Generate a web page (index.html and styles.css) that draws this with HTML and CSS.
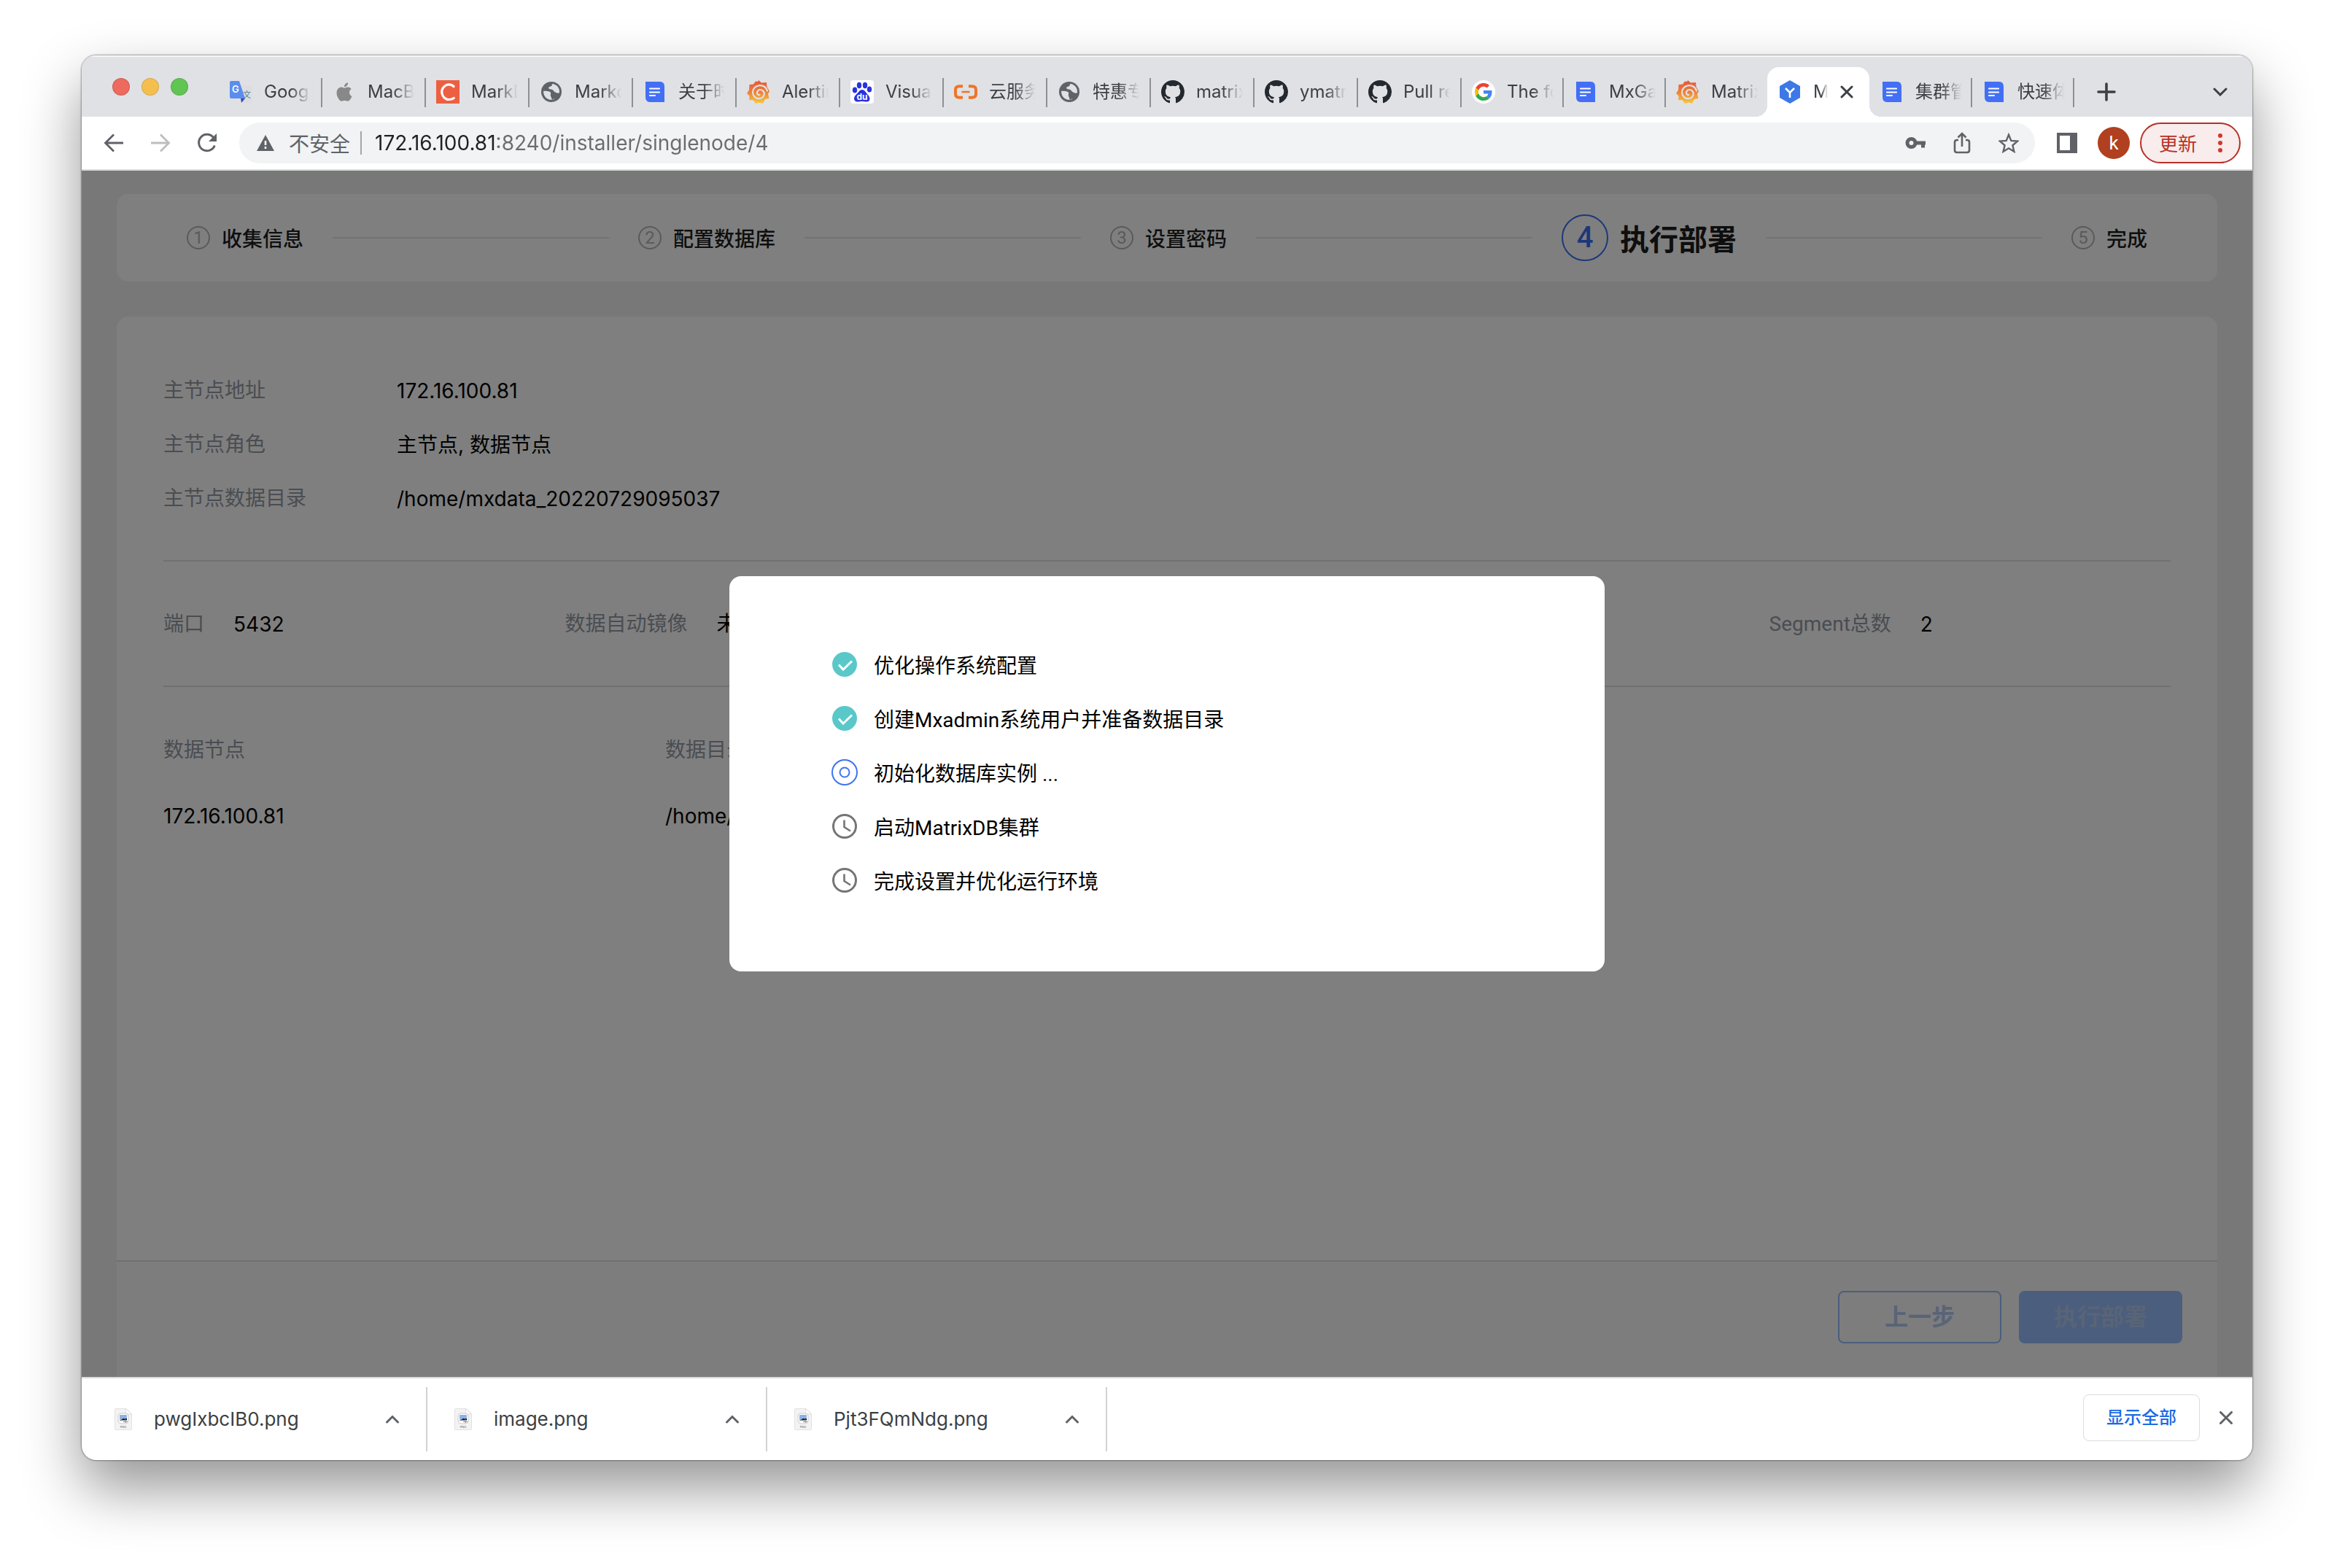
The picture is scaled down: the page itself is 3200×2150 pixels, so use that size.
FILE: index.html
```html
<!DOCTYPE html>
<html lang="zh-CN">
<head>
<meta charset="utf-8">
<title>MatrixDB</title>
<link rel="stylesheet" href="styles.css">
</head>
<body>
<svg class="sprite" aria-hidden="true">
  <defs>
    <linearGradient id="flame" x1="0" y1="0" x2="0" y2="1">
      <stop offset="0" stop-color="#e2553a"/><stop offset=".5" stop-color="#ee8038"/><stop offset="1" stop-color="#f7c93c"/>
    </linearGradient>
  </defs>
  <symbol id="i-translate" viewBox="0 0 32 32">
    <path d="M12 7h17a2 2 0 0 1 2 2v20a2 2 0 0 1-2 2H18z" fill="#dcdddf"/>
    <path d="M16 25h6l-5 6z" fill="#3a4bb5"/>
    <path d="M3 1h11l8 24H3a2 2 0 0 1-2-2V3a2 2 0 0 1 2-2z" fill="#5b8def"/>
    <text x="4" y="17" font-family="Inter, sans-serif" font-size="13" font-weight="600" fill="#fff">G</text>
    <text x="19" y="24" font-family="'Noto Sans CJK SC', sans-serif" font-size="11" fill="#5c7a8c">文</text>
  </symbol>
  <symbol id="i-apple" viewBox="-3 -3 30 30">
    <path fill="#888" d="M12.152 6.896c-.948 0-2.415-1.078-3.96-1.04-2.04.027-3.91 1.183-4.961 3.014-2.117 3.675-.546 9.103 1.519 12.09 1.013 1.454 2.208 3.09 3.792 3.039 1.52-.065 2.09-.987 3.935-.987 1.831 0 2.35.987 3.96.948 1.637-.026 2.676-1.48 3.676-2.948 1.156-1.688 1.636-3.325 1.662-3.415-.039-.013-3.182-1.221-3.22-4.857-.026-3.04 2.48-4.494 2.597-4.559-1.429-2.09-3.623-2.324-4.39-2.376-2-.156-3.675 1.09-4.61 1.09zM15.53 3.83c.843-1.012 1.4-2.427 1.245-3.83-1.207.052-2.662.805-3.532 1.818-.78.896-1.454 2.338-1.273 3.714 1.338.104 2.715-.688 3.559-1.701"/>
  </symbol>
  <symbol id="i-c" viewBox="0 0 32 32">
    <path fill="#ec6041" d="M0 0h32v32H0z"/>
    <path d="M24 8.500C21 5.500 16 5 12.500 7.500S7 14 8 18.500s5 8 9.500 8c3 0 5-.7 6.800-2" fill="none" stroke="#fff" stroke-width="3.200" stroke-linecap="round"/>
  </symbol>
  <symbol id="i-globe" viewBox="0 0 32 32">
    <circle cx="16" cy="16" r="14" fill="#5f6368"/>
    <path fill="#dfe1e5" d="M17 5c0 3-1.500 3.500-3.500 4s-1.500 3 .5 3.200 4 .3 5 2.300 2.500 1.500 3.500 2.500 3.500 1 4.500 0C27.500 10 23 5.500 17 5zM5 15c3-.5 6 0 8 .5s2.500 2 2 3.500.5 3 2 3.500 3-.5 4-1.500l-1 5C13 29 5 24 5 15z"/>
    <path fill="#5f6368" d="M14.500 20c2 2.500 4 1 5.500-.5l2 4.500-5 3z"/>
  </symbol>
  <symbol id="i-doc" viewBox="0 0 32 32">
    <path fill="#426ff5" d="M3 2h20q6 0 6 7v21H9q-6 0-6-7z"/>
    <path d="M9 11.500h13M9 16.500h13M9 21h7" stroke="#fff" stroke-width="2.200" stroke-linecap="round"/>
  </symbol>
  <symbol id="i-grafana" viewBox="0 0 32 32">
    <path fill="url(#flame)" d="M16 0l4 3.500 7-.5.500 6L31 15l-2 4 1.500 6-5.500 1-3 6-5-1.500L12 32l-3-4.500-6-.5.500-5.500L0 18l3-4.500L3.500 6 9 5.500 12 1.500l3 .5z"/>
    <path d="M28 14.500C26 9 21.500 6.800 17 7.200 11.500 7.800 7.800 12 8 17c.3 5 4.500 8.500 9 8.200 4-.3 7-3.500 6.800-7-.3-3.200-3-5.400-5.800-5.200-2.500.2-4.200 2.300-4 4.400.2 1.800 1.700 3 3.300 2.800" fill="none" stroke="#dfe1e5" stroke-width="2.200" stroke-linecap="round"/>
  </symbol>
  <symbol id="i-baidu" viewBox="0 0 32 32">
    <rect width="32" height="32" rx="4" fill="#fff"/>
    <g fill="#2932e1"><ellipse cx="6" cy="13.500" rx="3.200" ry="4"/><ellipse cx="12" cy="7" rx="3.200" ry="4.200"/><ellipse cx="20" cy="7" rx="3.200" ry="4.200"/><ellipse cx="26" cy="12.500" rx="3.200" ry="4"/>
    <path d="M16 13c4 0 5 4 8 7s4 9-1 9.500c-3 .3-4-.5-7-.5s-4 .8-7 .5C4 29 4 23 7.500 20S12 13 16 13z"/></g>
    <text x="8.500" y="27" font-family="Inter, sans-serif" font-size="12" font-weight="700" fill="#fff">du</text>
  </symbol>
  <symbol id="i-aliyun" viewBox="0 0 32 32">
    <path d="M12 8.200H7.500Q2 8.200 2 13v6q0 4.800 5.500 4.800H12M20 8.200h4.500q5.500 0 5.500 4.800v6q0 4.800-5.500 4.800H20" fill="none" stroke="#f07427" stroke-width="4"/>
    <path d="M10.500 16h11" stroke="#f07427" stroke-width="2.400"/>
  </symbol>
  <symbol id="i-github" viewBox="0 0 16 16">
    <path fill="#24292f" d="M8 0C3.580 0 0 3.580 0 8c0 3.540 2.290 6.530 5.470 7.590.4.070.55-.17.55-.38 0-.19-.01-.82-.01-1.490-2.010.37-2.530-.49-2.690-.94-.09-.23-.48-.94-.82-1.130-.28-.15-.68-.52-.01-.53.63-.01 1.080.58 1.230.82.72 1.210 1.870.87 2.330.66.07-.52.28-.87.51-1.070-1.780-.2-3.640-.89-3.640-3.950 0-.87.31-1.590.82-2.150-.08-.2-.36-1.020.08-2.120 0 0 .67-.21 2.200.82.64-.18 1.320-.27 2-.27s1.360.09 2 .27c1.530-1.040 2.200-.82 2.200-.82.44 1.100.16 1.920.08 2.120.51.56.82 1.270.82 2.150 0 3.070-1.870 3.750-3.650 3.950.29.25.54.73.54 1.480 0 1.070-.01 1.930-.01 2.200 0 .21.15.46.55.38A8.010 8.010 0 0 0 16 8c0-4.420-3.580-8-8-8z"/>
  </symbol>
  <symbol id="i-google" viewBox="-8 -8 64 64">
    <circle cx="24" cy="24" r="32" fill="#fff"/>
    <path fill="#EA4335" d="M24 9.500c3.540 0 6.710 1.220 9.210 3.600l6.850-6.850C35.900 2.380 30.470 0 24 0 14.620 0 6.510 5.380 2.560 13.220l7.980 6.190C12.430 13.720 17.740 9.500 24 9.500z"/>
    <path fill="#4285F4" d="M46.980 24.550c0-1.570-.15-3.090-.38-4.550H24v9.020h12.940c-.58 2.960-2.260 5.480-4.780 7.180l7.730 6c4.510-4.180 7.090-10.360 7.090-17.650z"/>
    <path fill="#FBBC05" d="M10.530 28.590c-.48-1.450-.76-2.990-.76-4.590s.27-3.140.76-4.590l-7.980-6.190C.92 16.460 0 20.120 0 24c0 3.880.92 7.540 2.560 10.780l7.970-6.190z"/>
    <path fill="#34A853" d="M24 48c6.480 0 11.930-2.130 15.890-5.810l-7.730-6c-2.150 1.450-4.920 2.300-8.160 2.300-6.260 0-11.570-4.220-13.470-9.910l-7.980 6.190C6.510 42.620 14.620 48 24 48z"/>
  </symbol>
  <symbol id="i-ymatrix" viewBox="0 0 32 32">
    <path fill="#3c78e7" d="M16 0l14 8v16l-14 8L2 24V8z"/>
    <path d="M10 11l6 6 6-6M16 17v7" fill="none" stroke="#fff" stroke-width="2.600"/>
  </symbol>
  <symbol id="i-up" viewBox="0 0 20 12"><path d="M2.500 10L10 2.500 17.500 10" fill="none" stroke="#5f6368" stroke-width="3" stroke-linecap="round"/></symbol>
  <symbol id="i-png" viewBox="0 0 24 30">
    <path d="M2 .5h14l7.500 7.500v20q0 1.500-1.500 1.500H2Q.5 29.500.5 28V2Q.5.500 2 .5z" fill="#f3f3f3" stroke="#e2e2e2"/>
    <path d="M15.500.5v7.500h8z" fill="#fff" stroke="#d5d5d5" stroke-width=".8"/>
    <rect x="5" y="7" width="14" height="14" rx="4" fill="#fff" stroke="#ccc"/>
    <path d="M7 10q0-1 1-1h8q1 0 1 1v5H7z" fill="#8db1e8"/>
    <path d="M7 16l4-1 1-1.500 1 1 4-.5v2.500H7z" fill="#10131a"/><path d="M12 18.500h6M15 15v5" stroke="#888" stroke-width="1"/>
    <text x="12" y="26.500" text-anchor="middle" font-family="Inter, sans-serif" font-size="4" font-weight="700" fill="#999">PNG</text>
  </symbol>
  <symbol id="i-check" viewBox="0 0 36 36"><circle cx="18" cy="18" r="17" fill="#5ac8c8"/><path d="M10 18.500l6 6.500L28 13.500" fill="none" stroke="#fff" stroke-width="3"/></symbol>
  <symbol id="i-running" viewBox="0 0 36 36"><g fill="none" stroke="#3d74f0" stroke-width="2"><circle cx="18" cy="18" r="17"/><circle cx="18" cy="18" r="6.500"/></g></symbol>
  <symbol id="i-clock" viewBox="0 0 36 36"><g fill="none" stroke="#757575" stroke-width="3"><circle cx="18" cy="18" r="15.500"/><path d="M17.500 9.500v9.500l8.500 5.500" stroke-width="2.600"/></g></symbol>
</svg>

<div class="window">
  <header class="tabstrip">
    <div class="lights"><i class="light red"></i><i class="light yellow"></i><i class="light green"></i></div>
    <nav class="tabs">
      <a class="tab" href="#"><svg><use href="#i-translate"/></svg><span>Googl</span></a>
      <a class="tab" href="#"><svg><use href="#i-apple"/></svg><span>MacB</span></a>
      <a class="tab" href="#"><svg><use href="#i-c"/></svg><span>MarkD</span></a>
      <a class="tab" href="#"><svg><use href="#i-globe"/></svg><span>Markd</span></a>
      <a class="tab" href="#"><svg><use href="#i-doc"/></svg><span>关于时</span></a>
      <a class="tab" href="#"><svg><use href="#i-grafana"/></svg><span>Alertin</span></a>
      <a class="tab" href="#"><svg><use href="#i-baidu"/></svg><span>Visual</span></a>
      <a class="tab" href="#"><svg><use href="#i-aliyun"/></svg><span>云服务</span></a>
      <a class="tab" href="#"><svg><use href="#i-globe"/></svg><span>特惠专</span></a>
      <a class="tab" href="#"><svg><use href="#i-github"/></svg><span>matrix</span></a>
      <a class="tab" href="#"><svg><use href="#i-github"/></svg><span>ymatri</span></a>
      <a class="tab" href="#"><svg><use href="#i-github"/></svg><span>Pull re</span></a>
      <a class="tab narrow" href="#"><svg><use href="#i-google"/></svg><span>The fo</span></a>
      <a class="tab narrow" href="#"><svg><use href="#i-doc"/></svg><span>MxGa</span></a>
      <a class="tab narrow bare" href="#"><svg><use href="#i-grafana"/></svg><span>Matrix</span></a>
      <div class="tab narrow active"><svg><use href="#i-ymatrix"/></svg><span>M</span>
        <button class="icon-btn" aria-label="关闭标签页"><svg class="close" viewBox="0 0 18 18"><path d="M2 2l14 14M16 2L2 16" stroke="#3c4043" stroke-width="3" stroke-linecap="round"/></svg></button></div>
      <a class="tab narrow" href="#"><svg><use href="#i-doc"/></svg><span>集群管</span></a>
      <a class="tab narrow" href="#"><svg><use href="#i-doc"/></svg><span>快速体</span></a>
    </nav>
    <button class="icon-btn new-tab" aria-label="新标签页"><svg width="26" height="26" viewBox="0 0 26 26"><path d="M13 2v22M2 13h22" stroke="#3c4043" stroke-width="3.600" stroke-linecap="round"/></svg></button>
    <button class="icon-btn tab-list" aria-label="搜索标签页"><svg width="20" height="12" viewBox="0 0 20 12"><path d="M2 2l8 8 8-8" fill="none" stroke="#3c4043" stroke-width="3" stroke-linecap="round"/></svg></button>
  </header>

  <div class="toolbar">
    <div class="nav-buttons">
      <button class="icon-btn" aria-label="后退"><svg width="28" height="28" viewBox="0 0 28 28"><path d="M27 14H3M14 2.500L2.500 14 14 25.500" fill="none" stroke="#5f6368" stroke-width="2.800"/></svg></button>
      <button class="icon-btn" aria-label="前进"><svg width="28" height="28" viewBox="0 0 28 28"><path d="M1 14h24M14 2.500L25.500 14 14 25.500" fill="none" stroke="#bcbec1" stroke-width="2.800"/></svg></button>
      <button class="icon-btn" aria-label="重新加载"><svg width="28" height="28" viewBox="0 0 28 28"><path d="M24.300 17.500A11.200 11.200 0 1 1 22.500 6.500" fill="none" stroke="#5f6368" stroke-width="3"/><path d="M27 1v11H16z" fill="#5f6368"/></svg></button>
    </div>
    <div class="omnibox">
      <svg class="warn" width="26" height="24" viewBox="0 0 26 24"><path d="M13 1L25 23H1z" fill="#5f6368"/><path d="M13 9v6M13 17v3" stroke="#fff" stroke-width="2.600"/></svg>
      <label class="insecure" for="url">不安全</label>
      <input class="url" id="url" type="text" value="172.16.100.81:8240/installer/singlenode/4">
      <button class="icon-btn" aria-label="密码"><svg width="28" height="18" viewBox="0 0 28 18"><path d="M8.500 9m-5.500 0a5.500 5.500 0 1 0 11 0 5.500 5.500 0 1 0-11 0M14 9h14M24.500 9v6.500" fill="none" stroke="#5f6368" stroke-width="5"/></svg></button>
      <button class="icon-btn" aria-label="分享"><svg width="28" height="30" viewBox="0 0 28 30"><path d="M9 11H7q-3 0-3 3v11q0 3 3 3h14q3 0 3-3V14q0-3-3-3h-2M14 20V3M8.500 7.500L14 2l5.500 5.500" fill="none" stroke="#5f6368" stroke-width="2.600"/></svg></button>
      <button class="icon-btn" aria-label="添加书签"><svg width="28" height="28" viewBox="0 0 28 28"><path d="M14 2.800l3.300 8.100 8.700.7-6.600 5.700 2 8.500L14 21.300l-7.400 4.500 2-8.500L2 11.600l8.700-.7z" fill="none" stroke="#5f6368" stroke-width="2.400"/></svg></button>
    </div>
    <button class="icon-btn" aria-label="侧边栏"><svg width="28" height="28" viewBox="0 0 28 28"><path d="M2 2h24v24H2z" fill="none" stroke="#5f6368" stroke-width="4"/><path d="M18 2h8v24h-8z" fill="#5f6368"/></svg></button>
    <button class="avatar">k</button>
    <button class="update">更新<svg width="6" height="28" viewBox="0 0 6 28"><g fill="#d0382b"><circle cx="3" cy="4" r="3"/><circle cx="3" cy="14" r="3"/><circle cx="3" cy="24" r="3"/></g></svg></button>
  </div>

  <main class="viewport">
    <ol class="steps">
      <li class="step"><span class="num">1</span>收集信息</li>
      <li class="step"><span class="num">2</span>配置数据库</li>
      <li class="step"><span class="num">3</span>设置密码</li>
      <li class="step current"><span class="num">4</span>执行部署</li>
      <li class="step"><span class="num">5</span>完成</li>
    </ol>
    <section class="card">
      <dl class="facts">
        <div class="fact"><dt>主节点地址</dt><dd class="latin">172.16.100.81</dd></div>
        <div class="fact"><dt>主节点角色</dt><dd class="latin">主节点, 数据节点</dd></div>
        <div class="fact"><dt>主节点数据目录</dt><dd class="latin">/home/mxdata_20220729095037</dd></div>
      </dl>
      <dl class="summary">
        <div class="stat"><dt>端口</dt><dd class="latin">5432</dd></div>
        <div class="stat"><dt>数据自动镜像</dt><dd>未启用</dd></div>
        <div class="stat last"><dt>Segment总数</dt><dd class="latin">2</dd></div>
      </dl>
      <table class="nodes">
        <thead><tr><th>数据节点</th><th>数据目录</th><th></th><th></th></tr></thead>
        <tbody><tr><td>172.16.100.81</td><td>/home/mxdata</td><td></td><td></td></tr></tbody>
      </table>
      <footer class="actions">
        <button class="btn outline" disabled>上一步</button>
        <button class="btn solid" disabled>执行部署</button>
      </footer>
    </section>
    <div class="overlay">
      <ul class="dialog" role="dialog" aria-label="执行部署">
        <li><svg><use href="#i-check"/></svg>优化操作系统配置</li>
        <li><svg><use href="#i-check"/></svg>创建Mxadmin系统用户并准备数据目录</li>
        <li><svg><use href="#i-running"/></svg>初始化数据库实例 ...</li>
        <li><svg><use href="#i-clock"/></svg>启动MatrixDB集群</li>
        <li><svg><use href="#i-clock"/></svg>完成设置并优化运行环境</li>
      </ul>
    </div>
  </main>

  <footer class="shelf">
    <div class="download"><svg class="file"><use href="#i-png"/></svg><span>pwgIxbcIB0.png</span><button class="icon-btn" aria-label="更多"><svg class="up"><use href="#i-up"/></svg></button></div>
    <div class="download"><svg class="file"><use href="#i-png"/></svg><span>image.png</span><button class="icon-btn" aria-label="更多"><svg class="up"><use href="#i-up"/></svg></button></div>
    <div class="download"><svg class="file"><use href="#i-png"/></svg><span>Pjt3FQmNdg.png</span><button class="icon-btn" aria-label="更多"><svg class="up"><use href="#i-up"/></svg></button></div>
    <div class="shelf-actions">
      <button class="show-all">显示全部</button>
      <button class="icon-btn" aria-label="关闭"><svg class="close" viewBox="0 0 18 18"><path d="M1.500 1.500l15 15M16.500 1.500l-15 15" stroke="#5f6368" stroke-width="3" stroke-linecap="round"/></svg></button>
    </div>
  </footer>
</div>
</body>
</html>
```

FILE: styles.css
```css
* { box-sizing: border-box; }

body {
  margin: 0;
  min-height: 100vh;
  padding: 76px 112px 148px;
  display: flex;
  background: #fff;
  font-family: Roboto, "Noto Sans CJK SC", sans-serif;
  font-size: 28px;
  line-height: 44px;
  color: #000;
}

ul, ol, dl, dd { margin: 0; padding: 0; list-style: none; }
a { color: inherit; text-decoration: none; }
svg { display: block; flex: none; }
button, input { font: inherit; color: inherit; border: 0; padding: 0; margin: 0; background: none; }
.sprite { position: absolute; width: 0; height: 0; }
.icon-btn { display: flex; align-items: center; justify-content: center; flex: none; }

.window {
  flex: 1;
  min-width: 0;
  display: flex;
  flex-direction: column;
  border-radius: 20px;
  overflow: hidden;
  background: #fff;
  box-shadow: 0 0 2px 1px rgba(0, 0, 0, .35), 0 38px 80px rgba(0, 0, 0, .42);
}

/* tab strip */
.tabstrip {
  display: flex;
  height: 84px;
  padding: 16px 34px 0 42px;
  background: #dfe1e5;
  box-shadow: inset 0 2px 1px rgba(255, 255, 255, .7);
  font-family: Inter, "Noto Sans CJK SC", sans-serif;
  font-size: 24px;
  color: #3c4043;
}
.lights { display: flex; gap: 16px; width: 145px; padding-top: 15px; }
.light { width: 24px; height: 24px; border-radius: 50%; border: 1px solid rgba(0, 0, 0, .12); }
.red { background: #ed6a5e; }
.yellow { background: #f5bf4f; }
.green { background: #61c554; }
.tabs { display: flex; }
.tab { position: relative; display: flex; align-items: center; width: 142px; padding-left: 15px; }
.tab.narrow { width: 140px; }
.tab::after { content: ""; position: absolute; right: -1px; top: 15px; width: 2px; height: 40px; background: #8e9094; }
.tab.bare::after { display: none; }
.tab > svg { width: 32px; height: 32px; }
.tab > span {
  width: 64px;
  margin-left: 16px;
  overflow: hidden;
  white-space: nowrap;
  -webkit-mask-image: linear-gradient(to right, #000 55%, transparent);
  mask-image: linear-gradient(to right, #000 55%, transparent);
}
.tab.active { background: #fff; border-radius: 16px 16px 0 0; }
.tab.active > span { width: 20px; }
.tab.active .icon-btn { margin-left: 17px; }
.tab.active::before, .tab.active::after {
  content: "";
  position: absolute;
  top: auto;
  bottom: 0;
  width: 16px;
  height: 16px;
}
.tab.active::before { left: -16px; background: radial-gradient(circle at 0 0, transparent 16px, #fff 16px); }
.tab.active::after { right: -16px; background: radial-gradient(circle at 100% 0, transparent 16px, #fff 16px); }
.close { width: 18px; height: 18px; }
.new-tab { margin-left: 32px; }
.tab-list { margin-left: auto; }

/* toolbar */
.toolbar {
  display: flex;
  align-items: center;
  height: 74px;
  padding: 0 16px 0 30px;
  border-bottom: 2px solid #dadcdc;
}
.nav-buttons { display: flex; gap: 36px; width: 186px; }
.omnibox {
  flex: 1;
  display: flex;
  align-items: center;
  height: 56px;
  padding: 0 22px;
  margin-right: 30px;
  border-radius: 28px;
  background: #f1f3f4;
  color: #5f6368;
}
.omnibox .icon-btn { width: 28px; margin-left: 36px; }
.warn { margin-left: 1px; }
.insecure { margin-left: 19px; padding-right: 14px; line-height: 32px; border-right: 2px solid #a4a6a9; }
.url {
  flex: 1;
  min-width: 0;
  margin-left: 18px;
  height: 44px;
  font-family: Inter, sans-serif;
  font-size: 28px;
  color: transparent;
  background: linear-gradient(to right, #202124 168px, #6a6c6f 168px);
  -webkit-background-clip: text;
  background-clip: text;
}
.avatar {
  width: 44px;
  height: 44px;
  margin: 0 14px 0 28px;
  border-radius: 50%;
  background: #b0401f;
  color: #fff;
  font-size: 26px;
  line-height: 44px;
}
.update {
  display: flex;
  align-items: center;
  justify-content: space-between;
  width: 138px;
  height: 56px;
  padding: 0 23px 0 24px;
  border: 2px solid #b63128;
  border-radius: 28px;
  background: #f8ecec;
  color: #b93228;
  font-size: 26px;
}
.insecure, .update { font-family: "Noto Sans CJK SC", sans-serif; }

/* page */
.viewport {
  position: relative;
  flex: 1;
  display: flex;
  flex-direction: column;
  gap: 48px;
  padding: 32px 48px 0;
  background: #f1f1f1;
}
.steps {
  display: flex;
  align-items: center;
  gap: 40px;
  height: 120px;
  padding: 0 96px;
  border-radius: 16px;
  background: #fff;
  color: #1c1c1c;
  font-family: "Noto Sans CJK SC", sans-serif;
  font-weight: 500;
}
.step { display: flex; align-items: center; gap: 16px; flex: 1 1 auto; white-space: nowrap; }
.step:last-child { flex: none; }
.step:not(:last-child)::after { content: ""; flex: 1 1 0; height: 2px; margin-left: 24px; background: #e6e6e6; }
.num {
  width: 32px;
  height: 32px;
  border: 2px solid #b4b4b4;
  border-radius: 50%;
  color: #b4b4b4;
  font-family: Roboto, sans-serif;
  font-size: 24px;
  font-weight: 400;
  line-height: 28px;
  text-align: center;
}
.current { font-size: 40px; font-weight: 700; }
.current .num { width: 64px; height: 64px; border-color: #3b70f0; color: #3b70f0; font-size: 40px; font-weight: 500; line-height: 60px; }

.card { flex: 1; display: flex; flex-direction: column; border-radius: 16px 16px 0 0; background: #fff; }
dt, th { color: #959ba5; font-weight: 400; }
.latin, td { font-family: Inter, "Noto Sans CJK SC", sans-serif; }
.facts { display: grid; gap: 30px; margin: 0 64px; padding: 80px 0 62px; border-bottom: 2px solid #e0e0e0; }
.fact { display: grid; grid-template-columns: 320px 1fr; }
.summary { display: grid; grid-template-columns: repeat(5, 1fr); margin: 0 64px; padding: 64px 0 62px; border-bottom: 2px solid #e0e0e0; }
.stat { display: flex; gap: 40px; }
.stat.last { grid-column: 5; }
.nodes { margin: 42px 64px 0; table-layout: fixed; border-collapse: collapse; }
.nodes th, .nodes td { width: 25%; height: 90px; padding: 0; text-align: left; }
.actions {
  display: flex;
  justify-content: flex-end;
  gap: 24px;
  margin-top: auto;
  padding: 40px 48px 46px;
  border-top: 2px solid #e0e0e0;
  background: #fafafa;
}
.btn { width: 224px; height: 72px; border-radius: 8px; font-size: 32px; font-weight: 700; }
.outline { border: 2px solid #96bcfc; color: #b2c8ee; }
.solid { background: #96bcfc; color: #b2c8ee; }

.overlay {
  position: absolute;
  inset: 0;
  display: flex;
  align-items: center;
  justify-content: center;
  background: rgba(0, 0, 0, .5);
}
.dialog { display: grid; gap: 30px; width: 1200px; padding: 102px 140px 100px; border-radius: 16px; background: #fff; }
.dialog li { display: flex; align-items: center; gap: 22px; }
.dialog svg { width: 36px; height: 36px; margin-bottom: 6px; }

/* downloads */
.shelf {
  display: flex;
  align-items: center;
  height: 114px;
  padding: 0 27px 0 8px;
  border-top: 2px solid #dcdcdc;
  font-family: Inter, sans-serif;
  color: #3c4043;
}
.download { display: flex; align-items: center; width: 466px; height: 88px; padding: 0 36px 0 37px; border-right: 2px solid #d2d2d2; font-size: 26px; }
.download .icon-btn { margin-left: auto; }
.file { width: 24px; height: 30px; margin-right: 30px; }
.up { width: 20px; height: 12px; }
.shelf-actions { display: flex; align-items: center; gap: 27px; margin-left: auto; padding-bottom: 4px; }
.show-all {
  width: 160px;
  height: 64px;
  border: 1px solid #dadce0;
  border-radius: 8px;
  color: #1a6be6;
  font-family: Inter, "Noto Sans CJK SC", sans-serif;
  font-size: 24px;
  font-weight: 500;
}
```
